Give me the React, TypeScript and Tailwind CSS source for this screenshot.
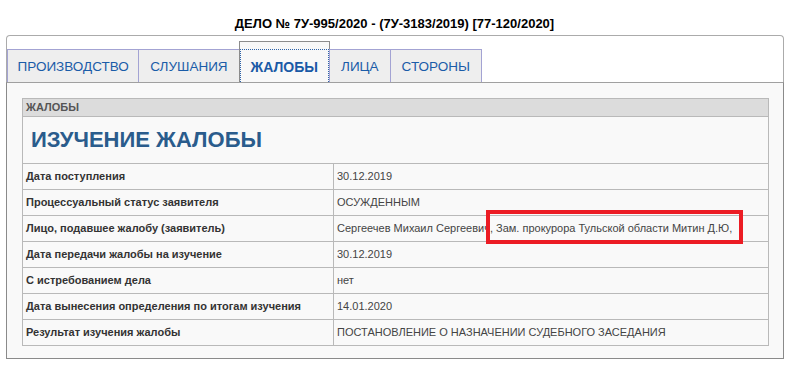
const TABS = ["ПРОИЗВОДСТВО", "СЛУШАНИЯ", "ЖАЛОБЫ", "ЛИЦА", "СТОРОНЫ"];
const ACTIVE = "ЖАЛОБЫ";

const ROWS: [string, string][] = [
  ["Дата поступления", "30.12.2019"],
  ["Процессуальный статус заявителя", "ОСУЖДЕННЫМ"],
  [
    "Лицо, подавшее жалобу (заявитель)",
    "Сергеечев Михаил Сергеевич, Зам. прокурора Тульской области Митин Д.Ю,",
  ],
  ["Дата передачи жалобы на изучение", "30.12.2019"],
  ["С истребованием дела", "нет"],
  ["Дата вынесения определения по итогам изучения", "14.01.2020"],
  ["Результат изучения жалобы", "ПОСТАНОВЛЕНИЕ О НАЗНАЧЕНИИ СУДЕБНОГО ЗАСЕДАНИЯ"],
];

function Tab({ label }: { label: string }) {
  if (label === ACTIVE) {
    return (
      <div className="-ml-px flex flex-col border border-b-0 border-[#8c8c8c] bg-[#f8f8f8] pt-[7px]">
        <div className="flex h-[33px] items-center border border-b-0 border-dotted border-[#2d62a8] px-[10px] pt-[2px] text-[14px] font-bold text-[#1a5aa6]">
          {label}
        </div>
      </div>
    );
  }
  return (
    <div className="-ml-px flex h-[33px] items-center border border-b-0 border-[#a3a3d3] bg-[#eeeeee] px-[11px] pt-[2px] text-[13.5px] text-[#1a5ca8] first:ml-0 first:px-[9.5px]">
      {label}
    </div>
  );
}

export default function App() {
  return (
    <div className="relative h-[365px] w-[789px] bg-white font-['Liberation_Sans',Arial,sans-serif] text-[#333]">
      <h1 className="pt-[16px] text-center text-[13px] font-bold leading-[15px] text-black">
        ДЕЛО № 7У-995/2020 - (7У-3183/2019) [77-120/2020]
      </h1>

      <div className="mx-[6px] mt-[4px] w-[778px]">
        <div className="flex h-[47px] items-end rounded-t-[4px] border border-b-0 border-[#ababab] bg-white">
          {TABS.map((t) => (
            <Tab key={t} label={t} />
          ))}
        </div>

        <div className="h-[277px] border-x border-b border-t border-[#8a8a8a] border-t-[#a0a0a0] bg-[#f9f9f9] px-[15px] pt-[15px]">
          <table className="w-[747px] border-collapse text-[11px]">
            <tbody>
              <tr className="h-[18px] bg-[#dcdcdc]">
                <td
                  colSpan={2}
                  className="border border-[#b9b9b9] px-[3px] font-bold text-[#555]"
                >
                  ЖАЛОБЫ
                </td>
              </tr>
              <tr className="h-[47px]">
                <td
                  colSpan={2}
                  className="border border-[#b9b9b9] px-[8px] pb-[2px] text-[22px] font-bold text-[#2a5c8c]"
                >
                  ИЗУЧЕНИЕ ЖАЛОБЫ
                </td>
              </tr>
              {ROWS.map(([label, value]) => (
                <tr key={label} className="h-[26px]">
                  <td className="w-[311px] border border-[#b9b9b9] px-[3px] font-bold text-[#333]">
                    {label}
                  </td>
                  <td className="border border-[#b9b9b9] px-[3px] text-[#444]">{value}</td>
                </tr>
              ))}
            </tbody>
          </table>
        </div>
      </div>

      {/* annotation frame drawn over the screenshot */}
      <div className="absolute left-[486px] top-[210px] h-[34px] w-[257px] border-[4px] border-[#ec1c24]" />
    </div>
  );
}
